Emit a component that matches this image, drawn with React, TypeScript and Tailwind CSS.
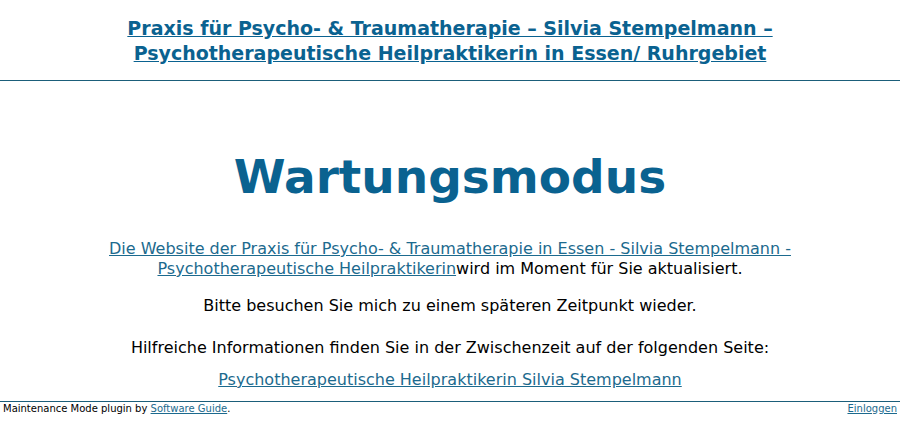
export default function App() {
  return (
    <div className="min-h-[434px] bg-white text-black flex flex-col" style={{ fontFamily: '"DejaVu Sans", sans-serif' }}>
      <header className="border-b border-[#1b5e7a] pt-[17px] pb-[13px] text-center">
        <a href="#" className="text-[19px] leading-[22px] font-bold text-[#0a6290] underline">
          Praxis für Psycho- &amp; Traumatherapie – Silvia Stempelmann –<br />
          Psychotherapeutische Heilpraktikerin in Essen/ Ruhrgebiet
        </a>
      </header>
      <main className="flex-1 text-center pt-[68px]">
        <h1 className="text-[47px] leading-[56px] font-bold text-[#0a6290]">Wartungsmodus</h1>
        <p className="mt-[34px] text-[16px] leading-[20px]">
          <a href="#" className="text-[#1c6a8e] underline">
            Die Website der Praxis für Psycho- &amp; Traumatherapie in Essen - Silvia Stempelmann -<br />
            Psychotherapeutische Heilpraktikerin
          </a>
          wird im Moment für Sie aktualisiert.
        </p>
        <p className="mt-[17px] text-[16px] leading-[20px]">Bitte besuchen Sie mich zu einem späteren Zeitpunkt wieder.</p>
        <p className="mt-[22px] text-[16px] leading-[20px]">Hilfreiche Informationen finden Sie in der Zwischenzeit auf der folgenden Seite:</p>
        <p className="mt-[12px] text-[16px] leading-[20px]">
          <a href="#" className="text-[#1c6a8e] underline">Psychotherapeutische Heilpraktikerin Silvia Stempelmann</a>
        </p>
      </main>
      <footer className="border-t border-[#1b5e7a] flex justify-between px-[3px] text-[10px] leading-[14px] pb-[18px]">
        <span>
          Maintenance Mode plugin by <a href="#" className="text-[#1c6a8e] underline">Software Guide</a>.
        </span>
        <a href="#" className="text-[#1c6a8e] underline">Einloggen</a>
      </footer>
    </div>
  )
}
